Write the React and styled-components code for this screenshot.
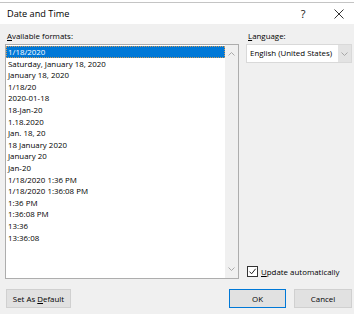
import React from 'react';
import styled, { createGlobalStyle } from 'styled-components';

const Global = createGlobalStyle`
  html, body {
    margin: 0;
    padding: 0;
    background: #fff;
  }
  body {
    font-family: "Open Sans", "Noto Sans", sans-serif;
    color: #000;
  }
`;

const formats = [
  '1/18/2020',
  'Saturday, January 18, 2020',
  'January 18, 2020',
  '1/18/20',
  '2020-01-18',
  '18-Jan-20',
  '1.18.2020',
  'Jan. 18, 20',
  '18 January 2020',
  'January 20',
  'Jan-20',
  '1/18/2020 1:36 PM',
  '1/18/2020 1:36:08 PM',
  '1:36 PM',
  '1:36:08 PM',
  '13:36',
  '13:36:08',
];

// fenêtre du dialogue
const Dialog = styled.div`
  width: 354px;
  height: 311px;
  margin-top: 2px;
  border-top: 1px solid #c4c4c4;
  display: flex;
  flex-direction: column;
  background: #f0f0f0;
`;

const TitleBar = styled.div`
  height: 21px;
  background: #fff;
  display: flex;
  align-items: center;
  padding: 0 7px;
  font-size: 9.2px;
  color: #000;
`;

const Title = styled.span`
  flex: 1;
`;

const TitleButton = styled.span`
  width: ${({ size }) => size};
  display: flex;
  align-items: center;
  justify-content: center;
  font-size: 11px;
  color: #111;
  margin-right: ${({ gap }) => gap};
`;

const Body = styled.div`
  flex: 1;
  padding: 6px 2px 0 5px;
  display: flex;
  flex-direction: column;
`;

const Columns = styled.div`
  display: flex;
  gap: 7px;
`;

const Column = styled.div`
  display: flex;
  flex-direction: column;
  width: ${({ width }) => width};
`;

const Label = styled.div`
  font-size: 7.9px;
  line-height: 12px;
  height: 14px;
  padding-left: 2px;
  color: #000;
`;

const Key = styled.span`
  text-decoration: underline;
  text-underline-offset: 1px;
`;

const ListBox = styled.div`
  height: 233px;
  border: 1px solid #adadad;
  background: #fff;
  display: flex;
`;

const Items = styled.div`
  flex: 1;
  padding-top: 1px;
`;

const Item = styled.div`
  height: 11.6px;
  line-height: 10px;
  font-size: 7.9px;
  padding-left: 1px;
  box-sizing: border-box;
  color: ${({ selected }) => (selected ? '#fff' : '#000')};
  background: ${({ selected }) => (selected ? '#0078d7' : 'transparent')};
  border: 1px dotted ${({ selected }) => (selected ? '#c99a5e' : 'transparent')};
  white-space: nowrap;
`;

const ScrollBar = styled.div`
  width: 13px;
  background: #f0f0f0;
  display: flex;
  flex-direction: column;
  justify-content: space-between;
  align-items: center;
  padding: 7px 0 7px;
`;

const Select = styled.div`
  height: 17px;
  border: 1px solid #d9d9d9;
  background: #fff;
  display: flex;
`;

const SelectText = styled.div`
  flex: 1;
  font-size: 7.9px;
  line-height: 17px;
  padding-left: 3px;
  white-space: nowrap;
`;

const SelectArrow = styled.div`
  width: 13px;
  background: #e3e3e3;
  display: flex;
  align-items: center;
  justify-content: center;
`;

const Spacer = styled.div`
  flex: 1;
`;

const CheckRow = styled.div`
  display: flex;
  align-items: center;
  gap: 3px;
  margin-bottom: 2px;
  padding-left: 1px;
  font-size: 7.9px;
  color: #000;
`;

const Box = styled.span`
  width: 9px;
  height: 9px;
  border: 1px solid #333;
  background: #fff;
  display: flex;
  align-items: center;
  justify-content: center;
`;

const Footer = styled.div`
  display: flex;
  align-items: center;
  margin-top: 10px;
  padding-left: 1px;
  gap: 8px;
`;

const Button = styled.button`
  height: 19px;
  width: ${({ width }) => width};
  padding: 0;
  font-family: inherit;
  font-size: 7.9px;
  color: #000;
  background: #e1e1e1;
  border: 1px solid ${({ primary }) => (primary ? '#0078d7' : '#d0d0d0')};
  margin-left: ${({ push }) => (push ? 'auto' : '0')};
`;

const Chevron = ({ up }) => (
  <svg width="7" height="4" viewBox="0 0 7 4">
    <path
      d={up ? 'M0.5 3.5 L3.5 0.5 L6.5 3.5' : 'M0.5 0.5 L3.5 3.5 L6.5 0.5'}
      fill="none"
      stroke="#a0a0a0"
      strokeWidth="0.9"
    />
  </svg>
);

const App = () => (
  <>
    <Global />
    <Dialog>
      <TitleBar>
        <Title>Date and Time</Title>
        <TitleButton size="12px" gap="25px">?</TitleButton>
        <TitleButton size="10px" gap="3px">
          <svg width="10" height="10" viewBox="0 0 10 10">
            <path d="M0.5 0.5 L9.5 9.5 M9.5 0.5 L0.5 9.5" stroke="#333" strokeWidth="1" />
          </svg>
        </TitleButton>
      </TitleBar>
      <Body>
        <Columns>
          <Column width="234px">
            <Label>
              <Key>A</Key>vailable formats:
            </Label>
            <ListBox>
              <Items>
                {formats.map((f, i) => (
                  <Item key={f} selected={i === 0}>
                    {f}
                  </Item>
                ))}
              </Items>
              <ScrollBar>
                <Chevron up />
                <Chevron />
              </ScrollBar>
            </ListBox>
          </Column>
          <Column width="106px">
            <Label>
              <Key>L</Key>anguage:
            </Label>
            <Select>
              <SelectText>English (United States)</SelectText>
              <SelectArrow>
                <Chevron />
              </SelectArrow>
            </Select>
            <Spacer />
            <CheckRow>
              <Box>
                <svg width="9" height="9" viewBox="0 0 9 9">
                  <path d="M1.5 4.6 L3.6 6.8 L7.6 1.8" fill="none" stroke="#222" strokeWidth="1" />
                </svg>
              </Box>
              <span>
                <Key>U</Key>pdate automatically
              </span>
            </CheckRow>
          </Column>
        </Columns>
        <Footer>
          <Button width="65px">
            Set As <Key>D</Key>efault
          </Button>
          <Button width="57px" primary push>
            OK
          </Button>
          <Button width="58px">Cancel</Button>
        </Footer>
      </Body>
    </Dialog>
  </>
);

export default App;
